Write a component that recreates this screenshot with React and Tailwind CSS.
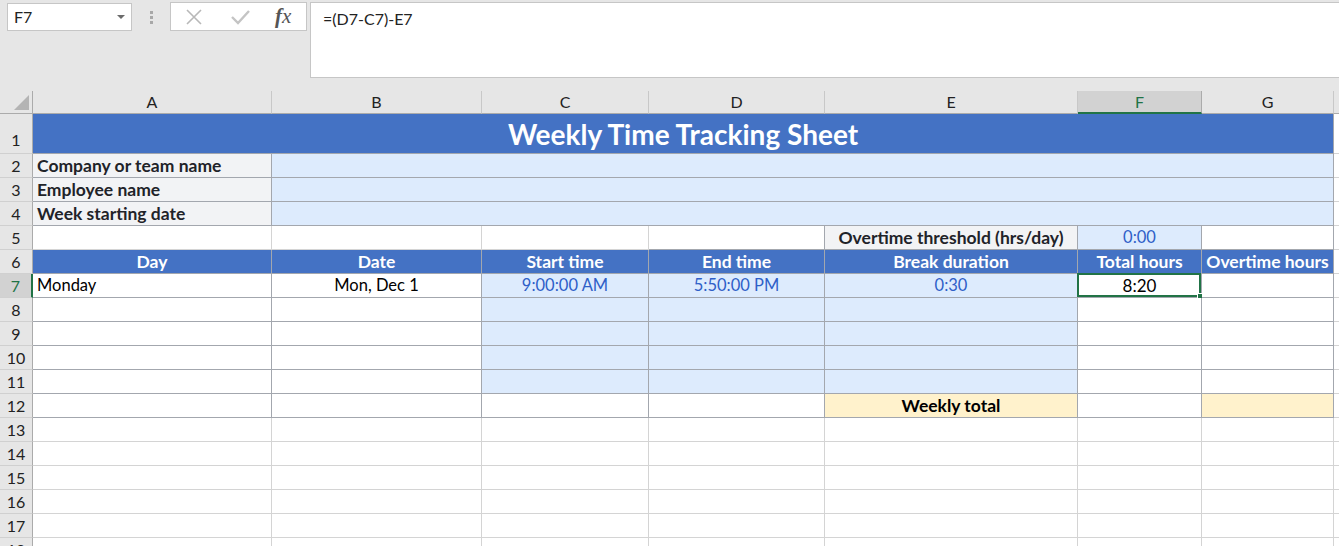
import React from 'react';

const FONT = { fontFamily: 'Lato, "Open Sans", Arial, sans-serif' };

const DARK = 'border-[#a3a7ae]';
const LIGHT = 'border-[#d4d4d4]';

const colLetters = ['A', 'B', 'C', 'D', 'E', 'F', 'G'];

const BOLD = 'font-bold text-[17.5px]';

// each row: height + list of cells (span over columns A..G) ; H column is added after
const rows = [
  {
    n: 1, h: 'h-[40px]',
    cells: [{ span: 7, text: 'Weekly Time Tracking Sheet', bg: 'bg-[#4472c4]', tx: 'text-white font-bold text-[28px]', al: 'justify-center', b: DARK }],
  },
  ...[
    [2, 'Company or team name'],
    [3, 'Employee name'],
    [4, 'Week starting date'],
  ].map(([n, label]) => ({
    n, h: 'h-[24px]',
    cells: [
      { text: label, bg: 'bg-[#f2f3f5]', tx: `${BOLD} text-[#1f2329]`, b: DARK },
      { span: 6, bg: 'bg-[#ddebfd]', b: DARK },
    ],
  })),
  {
    n: 5, h: 'h-[24px]',
    cells: [
      { b: LIGHT, bb: DARK }, { b: LIGHT, bb: DARK }, { b: LIGHT, bb: DARK }, { b: DARK },
      { text: 'Overtime threshold (hrs/day)', bg: 'bg-[#f2f3f5]', tx: `${BOLD} text-[#1f2329]`, al: 'justify-center', b: DARK },
      { text: '0:00', bg: 'bg-[#ddebfd]', tx: 'text-[16.5px] text-[#2f5fc8]', al: 'justify-center', b: DARK },
      { b: DARK },
    ],
  },
  {
    n: 6, h: 'h-[24px]',
    cells: ['Day', 'Date', 'Start time', 'End time', 'Break duration', 'Total hours', 'Overtime hours'].map((t) => ({
      text: t, bg: 'bg-[#4472c4]', tx: `${BOLD} text-white`, al: 'justify-center', b: DARK,
    })),
  },
  {
    n: 7, h: 'h-[24px]', sel: true,
    cells: [
      { text: 'Monday', b: DARK },
      { text: 'Mon, Dec 1', b: DARK, al: 'justify-center' },
      { text: '9:00:00 AM', bg: 'bg-[#ddebfd]', tx: 'text-[16.5px] text-[#2f5fc8]', al: 'justify-center', b: DARK },
      { text: '5:50:00 PM', bg: 'bg-[#ddebfd]', tx: 'text-[16.5px] text-[#2f5fc8]', al: 'justify-center', b: DARK },
      { text: '0:30', bg: 'bg-[#ddebfd]', tx: 'text-[16.5px] text-[#2f5fc8]', al: 'justify-center', b: DARK },
      { text: '8:20', b: DARK, al: 'justify-center', tx: 'text-black text-[17px]', selected: true },
      { b: DARK },
    ],
  },
  ...[8, 9, 10, 11].map((n) => ({
    n, h: 'h-[24px]',
    cells: [
      { b: DARK }, { b: DARK },
      { bg: 'bg-[#ddebfd]', b: DARK }, { bg: 'bg-[#ddebfd]', b: DARK }, { bg: 'bg-[#ddebfd]', b: DARK },
      { b: DARK }, { b: DARK },
    ],
  })),
  {
    n: 12, h: 'h-[24px]',
    cells: [
      { b: DARK }, { b: DARK }, { b: DARK }, { b: DARK },
      { text: 'Weekly total', bg: 'bg-[#fff2cc]', tx: `${BOLD} text-black`, al: 'justify-center', b: DARK },
      { b: DARK },
      { bg: 'bg-[#fff2cc]', b: DARK },
    ],
  },
  ...[13, 14, 15, 16, 17, 18].map((n) => ({
    n, h: 'h-[24px]',
    cells: Array.from({ length: 7 }, () => ({ b: LIGHT })),
  })),
];

const spanCls = { 1: 'col-span-1', 6: 'col-span-6', 7: 'col-span-7' };

function Cell({ c, h }) {
  return (
    <div
      className={`relative flex items-center px-[4px] border-r border-b leading-none whitespace-nowrap ${h} ${spanCls[c.span || 1]} ${c.b} ${c.bb || ''} ${c.bg || 'bg-white'} ${c.al || ''} ${c.tx || 'text-[16.5px] text-black'}`}
    >
      {c.text}
      {c.selected && (
        <div className="absolute -left-[1px] -top-[1px] w-[calc(100%+1px)] h-[calc(100%+1px)] border-2 border-[#217346] pointer-events-none">
          <div className="absolute -right-[4px] -bottom-[4px] w-[6px] h-[6px] bg-[#217346] border border-white" />
        </div>
      )}
    </div>
  );
}

function FormulaBar() {
  return (
    <div className="h-[91px] bg-[#e6e6e6] flex items-start pt-[2px]">
      <div className="ml-[7px] mt-[1px] w-[125px] h-[28px] bg-white border border-[#c6c6c6] flex items-center pl-[6px] pr-[6px] text-[16px] text-[#222]">
        <span className="flex-1">F7</span>
        <span className="w-0 h-0 border-l-[4px] border-r-[4px] border-t-[4px] border-l-transparent border-r-transparent border-t-[#6b6b6b]" />
      </div>
      <div className="w-[38px] h-[30px] flex flex-col items-center justify-center gap-[2px]">
        <span className="w-[3px] h-[3px] bg-[#a8a8a8]" />
        <span className="w-[3px] h-[3px] bg-[#a8a8a8]" />
        <span className="w-[3px] h-[3px] bg-[#a8a8a8]" />
      </div>
      <div className="w-[137px] h-[29px] bg-white border border-[#c6c6c6] flex items-center">
        <svg width="20" height="20" viewBox="0 0 20 20" className="ml-[13px]">
          <path d="M3 3 L17 17 M17 3 L3 17" stroke="#b8b8b8" strokeWidth="1.6" fill="none" />
        </svg>
        <svg width="22" height="20" viewBox="0 0 22 20" className="ml-[25px]">
          <path d="M3 10 L9 16 L20 4" stroke="#c4c4c4" strokeWidth="2.4" fill="none" />
        </svg>
        <span className="ml-[24px] text-[21px] italic text-[#555] leading-none" style={{ fontFamily: '"Liberation Serif", serif' }}>
          <span className="font-bold">f</span>x
        </span>
      </div>
      <div className="ml-[3px] flex-1 h-[76px] bg-white border border-[#c6c6c6] border-r-0 pl-[12px] pt-[4px] text-[16px] text-[#222]">
        =(D7-C7)-E7
      </div>
    </div>
  );
}

export default function App() {
  return (
    <div className="w-[1339px] h-[546px] overflow-hidden bg-white" style={FONT}>
      <FormulaBar />
      <div className="grid grid-cols-[33px_239px_210px_167px_176px_253px_124px_132px_1fr]">
        {/* column headers */}
        <div className="h-[23px] bg-[#e6e6e6] border-r border-b border-[#ababab] relative">
          <div
            className="absolute right-[3px] bottom-[3px] w-0 h-0"
            style={{ borderBottom: '15px solid #b4b4b4', borderLeft: '15px solid transparent' }}
          />
        </div>
        {colLetters.map((l) => (
          <div
            key={l}
            className={`h-[23px] flex items-center justify-center text-[16px] border-r ${
              l === 'F'
                ? 'bg-[#d2d2d2] text-[#217346] border-[#ababab] border-b-2 border-b-[#217346]'
                : 'bg-[#e6e6e6] text-[#222] border-[#c8c8c8] border-b border-b-[#ababab]'
            }`}
          >
            {l}
          </div>
        ))}
        <div className="h-[23px] bg-[#e6e6e6] border-b border-[#ababab]" />

        {rows.map((r) => (
          <React.Fragment key={r.n}>
            <div
              className={`${r.h} flex justify-center text-[16px] leading-none border-b border-b-[#d0d0d0] ${
                r.n === 1 ? 'items-end pb-[5px]' : 'items-center'
              } ${r.sel ? 'bg-[#d2d2d2] text-[#217346] border-r-2 border-r-[#217346]' : 'bg-[#e6e6e6] text-[#222] border-r border-r-[#ababab]'}`}
            >
              {r.n}
            </div>
            {r.cells.map((c, i) => (
              <Cell key={i} c={c} h={r.h} />
            ))}
            <div className={`${r.h} bg-white border-b ${LIGHT}`} />
          </React.Fragment>
        ))}
      </div>
    </div>
  );
}
